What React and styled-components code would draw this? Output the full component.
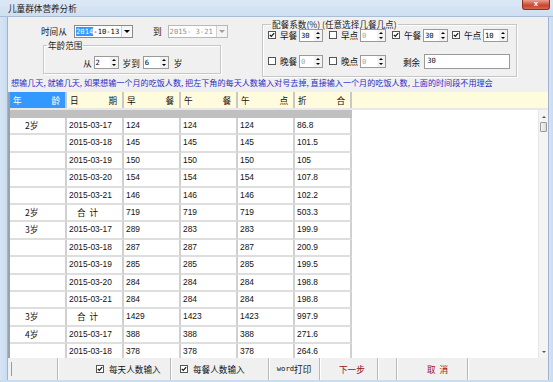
import React from 'react'
import styled, { createGlobalStyle } from 'styled-components'

const GlobalStyle = createGlobalStyle`
  html, body {
    margin: 0;
    padding: 0;
    background: #ffffff;
  }
  body {
    font-family: "Noto Sans CJK SC", "Liberation Sans", sans-serif;
    font-size: 8.5px;
    color: #111;
  }
`

const CJK = `"Noto Sans CJK SC", "Liberation Sans", sans-serif`
const NUM = `"Liberation Sans", "Noto Sans CJK SC", sans-serif`

const Window = styled.div`
  width: 553px;
  height: 382px;
  display: flex;
  flex-direction: column;
  background: #d3e2f4;
  overflow: hidden;
`

const TitleBar = styled.div`
  height: 17px;
  display: flex;
  align-items: flex-start;
  background: linear-gradient(#dce8f6, #cddff2);
  box-sizing: border-box;
  border-bottom: 1px solid #a9bdd6;
`

const Title = styled.div`
  font-family: ${CJK};
  font-size: 8.6px;
  line-height: 16px;
  padding-left: 8px;
  color: #1a1a1a;
`

const CloseBtn = styled.div`
  margin-left: auto;
  margin-right: 3px;
  width: 26px;
  height: 9px;
  border-radius: 0 0 3px 3px;
  background: linear-gradient(#e9a08e, #c9452e 60%, #d7664f);
  border: 1px solid #8f2f22;
  border-top: none;
  color: #fff;
  font-family: "Liberation Sans", sans-serif;
  font-weight: bold;
  font-size: 8px;
  line-height: 8px;
  text-align: center;
`

const Middle = styled.div`
  flex: 1;
  display: flex;
  min-height: 0;
`

const SideFrame = styled.div`
  width: ${p => p.$w}px;
  background: linear-gradient(90deg, #d6e4f4, #cadcf0);
  box-sizing: border-box;
  border-${p => p.$side}: 1px solid #9fb3cc;
`

const BottomFrame = styled.div`
  height: 2px;
  background: #cadcf0;
`

const Client = styled.div`
  flex: 1;
  display: flex;
  flex-direction: column;
  background: #f0f0f0;
  min-width: 0;
`

const TopPanel = styled.div`
  height: 59px;
  display: flex;
`

const LeftPart = styled.div`
  width: 254px;
  display: flex;
  flex-direction: column;
  padding-left: 33px;
  box-sizing: border-box;
`

const TimeRow = styled.div`
  display: flex;
  align-items: center;
  margin-top: 7px;
  height: 14px;
`

const Label = styled.span`
  font-family: ${CJK};
  font-size: 8.6px;
  line-height: 12px;
  width: ${p => (p.$w ? `${p.$w}px` : 'auto')};
  margin-left: ${p => p.$ml || 0}px;
  flex-shrink: 0;
  white-space: nowrap;
`

const Combo = styled.div`
  width: ${p => p.$w}px;
  height: 13px;
  margin-left: ${p => p.$ml || 0}px;
  box-sizing: border-box;
  border: 1px solid ${p => (p.$disabled ? '#b8b8b8' : '#8a8a8a')};
  background: #fff;
  display: flex;
  align-items: center;
  font-family: "DejaVu Sans Mono", monospace;
  font-size: 7.2px;
  color: ${p => (p.$disabled ? '#909090' : '#000')};
  padding-left: 1px;
`

const Sel = styled.span`
  background: #3399ff;
  color: #fff;
`

const DropBtn = styled.div`
  margin-left: auto;
  width: 11px;
  height: 11px;
  box-sizing: border-box;
  border-left: 1px solid #d0d0d0;
  display: flex;
  align-items: center;
  justify-content: center;
  background: ${p => (p.$disabled ? '#f4f4f4' : '#f6f6f6')};
  &::after {
    content: '';
    border-left: 3px solid transparent;
    border-right: 3px solid transparent;
    border-top: 3px solid ${p => (p.$disabled ? '#a0a0a0' : '#000')};
  }
`

const Group = styled.fieldset`
  margin: 0;
  padding: 0;
  border: 1px solid #c6c6c6;
  box-shadow: inset 1px 1px 0 #fff, 1px 1px 0 #fff;
  box-sizing: border-box;
  min-width: 0;
`

const AgeGroup = styled(Group)`
  width: 178px;
  height: 34px;
  margin: 2px 0 0 2px;
`

const Legend = styled.legend`
  font-family: ${CJK};
  font-size: 8.6px;
  line-height: 10px;
  padding: 0 1px;
  margin-left: ${p => p.$ml || 3}px;
  color: #1a1a1a;
`

const AgeRow = styled.div`
  display: flex;
  align-items: center;
  padding-left: 39px;
  margin-top: 6px;
`

const Spin = styled.div`
  width: ${p => p.$w}px;
  height: 13px;
  margin-left: ${p => p.$ml || 0}px;
  flex-shrink: 0;
  box-sizing: border-box;
  border: 1px solid #9a9a9a;
  background: #fff;
  display: flex;
  align-items: center;
  font-family: "DejaVu Sans Mono", monospace;
  font-size: 7.2px;
  color: ${p => (p.$disabled ? '#a8a8a8' : '#000')};
  padding-left: 1px;
`

const SpinBtns = styled.div`
  margin-left: auto;
  width: 8px;
  height: 11px;
  display: flex;
  flex-direction: column;
  align-items: center;
  justify-content: space-between;
  padding: 2px 0;
  box-sizing: border-box;
  background: #f2f2f2;
  &::before {
    content: '';
    border-left: 2.5px solid transparent;
    border-right: 2.5px solid transparent;
    border-bottom: 2.5px solid #000;
  }
  &::after {
    content: '';
    border-left: 2.5px solid transparent;
    border-right: 2.5px solid transparent;
    border-top: 2.5px solid #000;
  }
`

const CoefGroup = styled(Group)`
  width: 255px;
  height: 58px;
  margin: 2px 0 0 0;
  padding: 0 0 0 5px;
`

const CoefGrid = styled.div`
  display: grid;
  grid-template-columns: 61px 63px 60px 60px;
  row-gap: 12px;
  margin-top: -1px;
`

const Unit = styled.div`
  display: flex;
  align-items: center;
  height: 14px;
`

const Box = styled.span`
  width: 8px;
  height: 8px;
  flex-shrink: 0;
  box-sizing: border-box;
  border: 1px solid #555;
  background: #fff;
  display: inline-flex;
  align-items: center;
  justify-content: center;
  margin-right: ${p => p.$mr ?? 4}px;
`

const Remain = styled.div`
  grid-column: 3 / span 2;
  display: flex;
  align-items: center;
  padding-left: 11px;
`

const TextInput = styled.div`
  width: 86px;
  height: 15px;
  margin-left: 4px;
  box-sizing: border-box;
  border: 1px solid #9a9a9a;
  background: #fff;
  font-family: "DejaVu Sans Mono", monospace;
  font-size: 7.2px;
  line-height: 12px;
  padding-left: 2px;
`

const Info = styled.div`
  height: 16px;
  line-height: 14px;
  padding-left: 3px;
  font-family: ${CJK};
  font-size: 8.1px;
  color: #2b2bc6;
  white-space: nowrap;
`

const Grid = styled.div`
  height: 266px;
  display: flex;
  flex-direction: column;
  border-left: 2px solid #9aa2ae;
  background: #fff;
  overflow: hidden;
`

const HeadRow = styled.div`
  display: flex;
  height: 16px;
  background: #fffbdc;
  border-bottom: 2px solid #e8e8e8;
  flex-shrink: 0;
`

const HeadCell = styled.div`
  width: 57px;
  box-sizing: border-box;
  display: flex;
  justify-content: space-between;
  align-items: center;
  padding: 0 5px 0 3px;
  font-family: ${CJK};
  font-size: 8.6px;
  background: ${p => (p.$active ? '#3399ff' : 'transparent')};
  color: ${p => (p.$active ? '#fff' : '#111')};
  border-right: 2px solid #c8c8c8;
`

const BodyArea = styled.div`
  flex: 1;
  display: flex;
  min-height: 0;
`

const Rows = styled.div`
  flex: 1;
  overflow: hidden;
`

const GrayRow = styled.div`
  width: 342px;
  height: 8px;
  background: #c0c0c0;
`

const Row = styled.div`
  display: flex;
  height: 17.4px;
  width: 342px;
`

const Cell = styled.div`
  width: 57px;
  box-sizing: border-box;
  border-right: 2px solid #d0d0d0;
  border-bottom: 2px solid #dedede;
  font-family: ${p => (p.$cjk ? CJK : NUM)};
  font-size: ${p => (p.$cjk ? '8.6px' : '8.4px')};
  line-height: 14px;
  padding-left: ${p => p.$pl ?? 2}px;
  white-space: pre;
  color: #111;
`

const Scroll = styled.div`
  width: 9px;
  display: flex;
  flex-direction: column;
  align-items: center;
  background: #f4f4f4;
  border-left: 1px solid #e6e6e6;
`

const Arrow = styled.div`
  margin: ${p => p.$m};
  border-left: 2px solid transparent;
  border-right: 2px solid transparent;
  border-${p => (p.$up ? 'bottom' : 'top')}: 2px solid #555;
`

const Thumb = styled.div`
  width: 7px;
  height: 10px;
  margin-top: 4px;
  box-sizing: border-box;
  border: 1px solid #9a9a9a;
  border-radius: 1px;
  background: linear-gradient(90deg, #f4f4f4, #dcdcdc);
`

const BottomBar = styled.div`
  height: 22px;
  display: flex;
  align-items: stretch;
  background: #f0f0f0;
  padding-left: 2px;
`

const Panel = styled.div`
  width: ${p => p.$w}px;
  flex-shrink: 0;
  box-sizing: border-box;
  display: flex;
  align-items: center;
  justify-content: ${p => (p.$center ? 'center' : 'flex-start')};
  padding-left: ${p => p.$pl || 0}px;
  border-right: 1px solid #b8b8b8;
  box-shadow: 1px 0 0 #fff;
  font-family: ${CJK};
  font-size: 8.6px;
  line-height: 12px;
  white-space: pre;
  color: ${p => p.$color || '#111'};
`

const FirstPanel = styled(Panel)`
  &::before {
    content: '';
    width: 1px;
    height: 14px;
    margin-left: 1px;
    background: #9a9a9a;
  }
`

const Mono = styled.span`
  font-family: "DejaVu Sans Mono", monospace;
  font-size: 7.2px;
`

const Check = ({ on, mr }) => (
  <Box $mr={mr}>
    {on && (
      <svg width="6" height="6" viewBox="0 0 6 6">
        <path d="M0.8 2.8 L2.3 4.4 L5.2 1.2" stroke="#111" strokeWidth="1.2" fill="none" />
      </svg>
    )}
  </Box>
)

const SpinBox = ({ value, w = 24, ml, disabled }) => (
  <Spin $w={w} $ml={ml} $disabled={disabled}>
    {value}
    <SpinBtns />
  </Spin>
)

const CoefUnit = ({ on, label, value, w }) => (
  <Unit>
    <Check on={on} />
    <Label $w={19}>{label}</Label>
    <SpinBox value={value} w={w} disabled={!on} />
  </Unit>
)

const rows = [
  ['2岁', '2015-03-17', '124', '124', '124', '86.8'],
  ['', '2015-03-18', '145', '145', '145', '101.5'],
  ['', '2015-03-19', '150', '150', '150', '105'],
  ['', '2015-03-20', '154', '154', '154', '107.8'],
  ['', '2015-03-21', '146', '146', '146', '102.2'],
  ['2岁', '合  计', '719', '719', '719', '503.3'],
  ['3岁', '2015-03-17', '289', '283', '283', '199.9'],
  ['', '2015-03-18', '287', '287', '287', '200.9'],
  ['', '2015-03-19', '285', '285', '285', '199.5'],
  ['', '2015-03-20', '284', '284', '284', '198.8'],
  ['', '2015-03-21', '284', '284', '284', '198.8'],
  ['3岁', '合  计', '1429', '1423', '1423', '997.9'],
  ['4岁', '2015-03-17', '388', '388', '388', '271.6'],
  ['', '2015-03-18', '378', '378', '378', '264.6'],
  ['', '2015-03-19', '', '', '', ''],
]

const heads = [['年', '龄'], ['日', '期'], ['早', '餐'], ['午', '餐'], ['午', '点'], ['折', '合']]

const App = () => {
  return (
    <Window>
      <GlobalStyle />
      <TitleBar>
        <Title>儿童群体营养分析</Title>
        <CloseBtn>x</CloseBtn>
      </TitleBar>
      <Middle>
        <SideFrame $w={8} $side="right" />
        <Client>
          <TopPanel>
            <LeftPart>
              <TimeRow>
                <Label $w={33}>时间从</Label>
                <Combo $w={59}>
                  <Sel>2014</Sel>-10-13
                  <DropBtn />
                </Combo>
                <Label $ml={20}>到</Label>
                <Combo $w={60} $ml={6} $disabled>
                  2015- 3-21
                  <DropBtn $disabled />
                </Combo>
              </TimeRow>
              <AgeGroup>
                <Legend>年龄范围</Legend>
                <AgeRow>
                  <Label>从</Label>
                  <SpinBox value="2" w={25} ml={2} />
                  <Label $ml={4}>岁到</Label>
                  <SpinBox value="6" w={26} ml={3} />
                  <Label $ml={5}>岁</Label>
                </AgeRow>
              </AgeGroup>
            </LeftPart>
            <CoefGroup>
              <Legend $ml={0}>配餐系数(%) (任意选择几餐几点)</Legend>
              <CoefGrid>
                <CoefUnit on label="早餐" value="30" w={24} />
                <CoefUnit label="早点" value="0" w={26} />
                <CoefUnit on label="午餐" value="30" w={25} />
                <CoefUnit on label="午点" value="10" w={25} />
                <CoefUnit label="晚餐" value="0" w={24} />
                <CoefUnit label="晚点" value="0" w={26} />
                <Remain>
                  <Label>剩余</Label>
                  <TextInput>30</TextInput>
                </Remain>
              </CoefGrid>
            </CoefGroup>
          </TopPanel>
          <Info>
            想输几天, 就输几天, 如果想输一个月的吃饭人数, 把左下角的每天人数输入对号去掉, 直接输入一个月的吃饭人数, 上面的时间段不用理会
          </Info>
          <Grid>
            <HeadRow>
              {heads.map(([a, b], i) => (
                <HeadCell key={i} $active={i === 0}>
                  <span>{a}</span>
                  <span>{b}</span>
                </HeadCell>
              ))}
            </HeadRow>
            <BodyArea>
              <Rows>
                <GrayRow />
                {rows.map((r, i) => (
                  <Row key={i}>
                    <Cell $cjk $pl={15}>{r[0]}</Cell>
                    <Cell $cjk={r[1].startsWith('合')} $pl={r[1].startsWith('合') ? 10 : 2}>
                      {r[1]}
                    </Cell>
                    <Cell>{r[2]}</Cell>
                    <Cell>{r[3]}</Cell>
                    <Cell>{r[4]}</Cell>
                    <Cell>{r[5]}</Cell>
                  </Row>
                ))}
              </Rows>
              <Scroll>
                <Arrow $up $m="6px 0 0 0" />
                <Thumb />
                <Arrow $m="auto 0 5px 0" />
              </Scroll>
            </BodyArea>
          </Grid>
          <BottomBar>
            <FirstPanel $w={48} />
            <Panel $w={113} $pl={38}>
              <Check on mr={5} />
              每天人数输入
            </Panel>
            <Panel $w={98} $pl={9}>
              <Check on mr={5} />
              每餐人数输入
            </Panel>
            <Panel $w={51} $center>
              <Mono>word</Mono>打印
            </Panel>
            <Panel $w={58} $pl={19} $color="#8b1010">
              下一步
            </Panel>
            <Panel $w={19} />
            <Panel $w={71} $pl={30} $color="#a01010">
              取  消
            </Panel>
          </BottomBar>
        </Client>
        <SideFrame $w={5} $side="left" />
      </Middle>
      <BottomFrame />
    </Window>
  )
}

export default App
